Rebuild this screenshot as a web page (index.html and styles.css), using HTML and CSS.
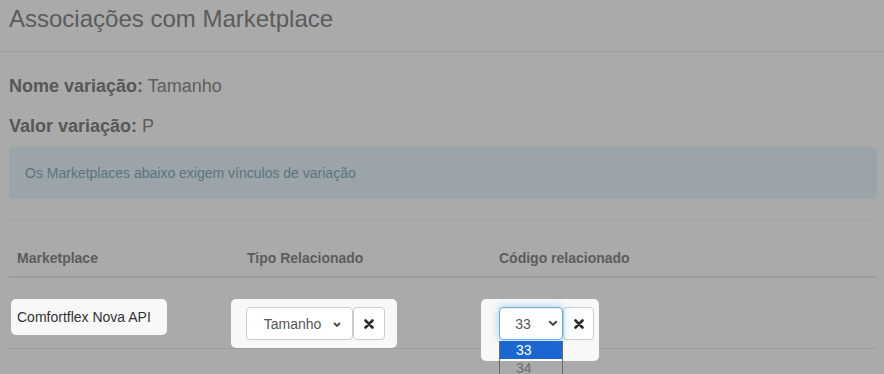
FILE: index.html
```html
<!DOCTYPE html>
<html lang="pt-BR">
<head>
<meta charset="utf-8">
<title>Associações com Marketplace</title>
<link rel="stylesheet" href="styles.css">
</head>
<body>
<div class="modal">
  <div class="modal-header">
    <h3 class="modal-title">Associações com Marketplace</h3>
  </div>
  <div class="modal-body">
    <p class="info"><strong>Nome variação:</strong> Tamanho</p>
    <p class="info"><strong>Valor variação:</strong> P</p>
    <div class="alert">Os Marketplaces abaixo exigem vínculos de variação</div>
    <hr class="sep">
    <div class="grid">
      <div class="thead">
        <div class="th col1">Marketplace</div>
        <div class="th col2">Tipo Relacionado</div>
        <div class="th col3">Código relacionado</div>
      </div>
      <div class="row">
        <div class="hl hl-name">Comfortflex Nova API</div>
        <div class="hl hl-tipo">
          <div class="input-group">
            <div class="select-wrap">
              <select class="form-select sel-tipo"><option>Tamanho</option></select>
              <svg class="chev chev-tipo" width="8" height="5" viewBox="0 0 8 5"><polyline points="1,1 4,4 7,1" fill="none" stroke="#4a4a4a" stroke-width="1.8"/></svg>
            </div>
            <button class="btn-x" type="button"><svg width="10" height="10" viewBox="0 0 10 10"><path d="M1.5 1.5 L8.5 8.5 M8.5 1.5 L1.5 8.5" stroke="#2b2b2b" stroke-width="2.6" stroke-linecap="round"/></svg></button>
          </div>
        </div>
        <div class="hl hl-cod">
          <div class="input-group">
            <div class="select-wrap">
              <select class="form-select sel-cod focus"><option>33</option><option>34</option></select>
              <svg class="chev chev-cod" width="10" height="6" viewBox="0 0 10 6"><polyline points="1.2,1.2 5,4.8 8.8,1.2" fill="none" stroke="#4a4a4a" stroke-width="2"/></svg>
              <ul class="dropdown">
                <li class="opt sel">33</li>
                <li class="opt dim">34</li>
              </ul>
            </div>
            <button class="btn-x btn-x-cod" type="button"><svg width="10" height="10" viewBox="0 0 10 10"><path d="M1.5 1.5 L8.5 8.5 M8.5 1.5 L1.5 8.5" stroke="#2b2b2b" stroke-width="2.6" stroke-linecap="round"/></svg></button>
          </div>
        </div>
      </div>
    </div>
  </div>
</div>
</body>
</html>
```
FILE: styles.css
```css
* { box-sizing: border-box; }
html {
  margin: 0;
  padding: 0;
  height: 100%;
  background: #aaaaaa;
}
body {
  margin: 0;
  padding: 0;
  min-height: 100%;
  font-family: "Liberation Sans", Arial, Helvetica, sans-serif;
  font-size: 14px;
  line-height: 20px;
  color: #5a5a5a;
}
.modal-header {
  padding: 5px 9px 19px;
  border-bottom: 1px solid #9f9f9f;
}
.modal-title {
  margin: 0;
  font-size: 24px;
  font-weight: normal;
  line-height: 27px;
  color: #5b5b5b;
}
.modal-body {
  padding: 24px 7px 26px 9px;
}
.info {
  margin: 0;
  font-size: 18px;
  line-height: 20px;
  color: #5e5e5e;
}
.info strong { color: #575757; }
.info + .info { margin-top: 20px; }
.alert {
  margin: 11px 0 20px;
  padding: 15px;
  border: 1px solid #94a6ab;
  border-radius: 4px;
  background: #9ba4a8;
  color: #5a7481;
  font-size: 14px;
}
.sep {
  margin: 0;
  height: 0;
  border: 0;
  border-top: 1px solid #a2a2a2;
}
.grid { margin-top: 20px; }
.thead {
  display: flex;
  border-bottom: 2px solid #9c9c9c;
}
.th {
  padding: 8px;
  font-weight: bold;
  color: #5c5c5c;
}
.col1 { width: 230px; }
.col2 { width: 252px; }
.col3 { flex: 1; }
.row {
  display: flex;
  align-items: flex-start;
  height: 71px;
  padding: 21px 0 0 2px;
  border-bottom: 1px solid #9c9c9c;
}
.hl {
  position: relative;
  z-index: 2;
  background: #f8f8f8;
  border-radius: 5px;
}
.hl-name {
  width: 156px;
  padding: 8px 6px;
  color: #333;
}
.hl-tipo {
  margin-left: 64px;
  padding: 8px 12px 8px 15px;
}
.hl-cod {
  margin-left: 84px;
  padding: 8px 5px 21px 18px;
}
.input-group { display: flex; }
.select-wrap { position: relative; }
.form-select {
  display: block;
  height: 33px;
  margin: 0;
  border: 1px solid #cccccc;
  border-radius: 4px;
  background: #fff;
  color: #555;
  font-family: inherit;
  font-size: 14px;
  text-align-last: center;
  -webkit-appearance: none;
  appearance: none;
  outline: none;
}
.sel-tipo {
  width: 107px;
  padding: 0 30px 0 16px;
}
.sel-cod {
  width: 64px;
  padding: 0 24px 0 8px;
}
.focus {
  border-color: #66afe9;
  box-shadow: inset 0 1px 1px rgba(0,0,0,.075), 0 0 8px rgba(102,175,233,.6);
}
.chev {
  position: absolute;
  pointer-events: none;
}
.chev-tipo { right: 12px; top: 15px; }
.chev-cod { right: 5px; top: 13px; }
.btn-x {
  display: flex;
  align-items: center;
  justify-content: center;
  width: 32px;
  height: 33px;
  margin: 0;
  padding: 0;
  border: 1px solid #cccccc;
  border-radius: 4px;
  background: #fff;
}
.btn-x-cod { width: 31px; }
.dropdown {
  position: absolute;
  left: 0;
  top: 34px;
  width: 64px;
  margin: 0;
  padding: 0;
  list-style: none;
  border: 1px solid #6a6a6a;
  border-top: 0;
  font-size: 14px;
  line-height: 18px;
}
.opt {
  height: 18px;
  padding-left: 16px;
}
.opt.sel {
  background: #1a67d2;
  color: #fff;
}
.opt.dim {
  background: linear-gradient(#fff 0 2px, #aaaaaa 2px);
  color: #6d6d6d;
}
```
